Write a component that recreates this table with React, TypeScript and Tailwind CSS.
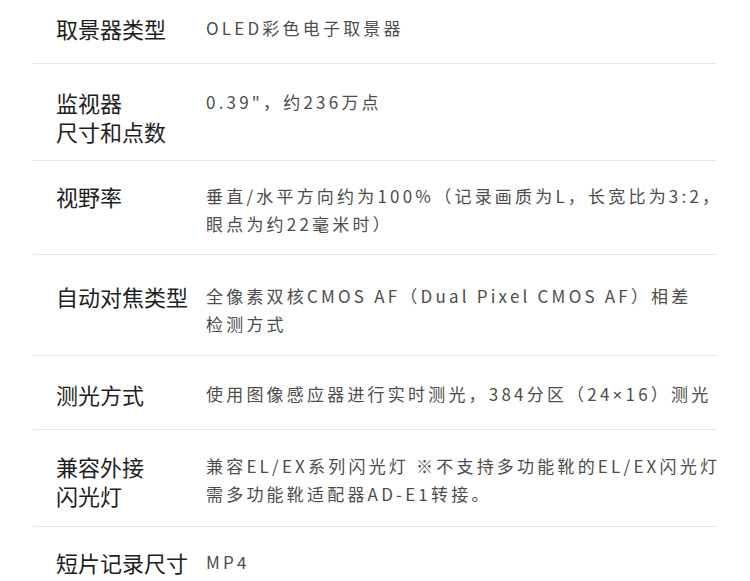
const specs: { label: string[]; value: React.ReactNode[]; cls: string }[] = [
  { label: ["取景器类型"], value: ["OLED彩色电子取景器"], cls: "h-[64px] pt-[14px]" },
  { label: ["监视器", "尺寸和点数"], value: ["0.39\"，约236万点"], cls: "h-[97px] pt-[24px]" },
  {
    label: ["视野率"],
    value: ["垂直/水平方向约为100%（记录画质为L，长宽比为3:2，", "眼点为约22毫米时）"],
    cls: "h-[94px] pt-[21px]",
  },
  {
    label: ["自动对焦类型"],
    value: ["全像素双核CMOS AF（Dual Pixel CMOS AF）相差", "检测方式"],
    cls: "h-[101px] pt-[27px]",
  },
  {
    label: ["测光方式"],
    value: [
      <>
        使用图像感应器进行实时测光，384分区（24<span className="font-['Noto_Sans',sans-serif]">×</span>16）测光
      </>,
    ],
    cls: "h-[74px] pt-[24px]",
  },
  {
    label: ["兼容外接", "闪光灯"],
    value: ["兼容EL/EX系列闪光灯 ※不支持多功能靴的EL/EX闪光灯", "需多功能靴适配器AD-E1转接。"],
    cls: "h-[97px] pt-[22px]",
  },
  { label: ["短片记录尺寸"], value: ["MP4"], cls: "pt-[21px]" },
];

export default function App() {
  return (
    <div className="w-[750px] h-[581px] overflow-hidden bg-white font-['Noto_Sans_CJK_SC',sans-serif]">
      <div className="mx-[33px]">
        {specs.map((row, i) => (
          <div
            key={i}
            className={`flex box-border pl-[23px] ${row.cls} ${
              i < specs.length - 1 ? "border-b-[1.5px] border-[#e6e6e6]" : ""
            }`}
          >
            <div className="w-[150px] shrink-0 text-[22px] leading-[29px] text-[#1e1e1e]">
              {row.label.map((l) => (
                <div key={l}>{l}</div>
              ))}
            </div>
            <div className="text-[17px] leading-[28px] tracking-[3.2px] text-[#4d4d4d] whitespace-nowrap">
              {row.value.map((v, j) => (
                <div key={j}>{v}</div>
              ))}
            </div>
          </div>
        ))}
      </div>
    </div>
  );
}
